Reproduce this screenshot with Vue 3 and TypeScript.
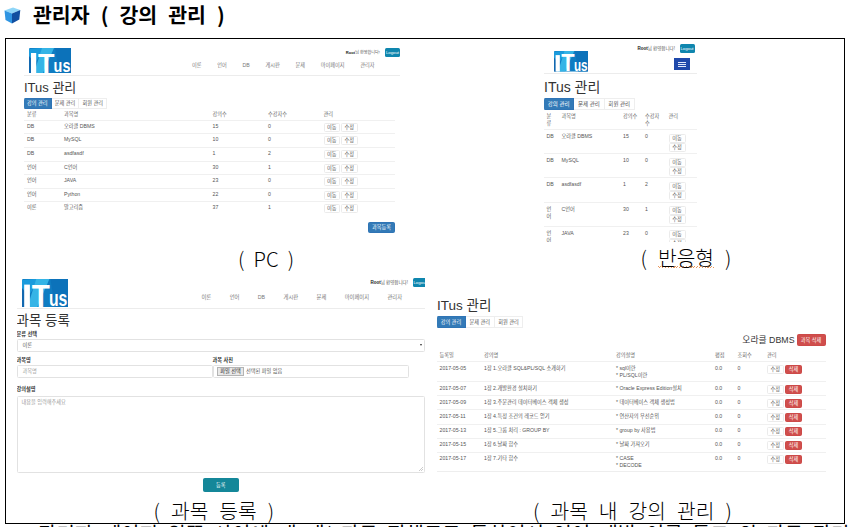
<script setup lang="ts">
import { defineComponent, h } from 'vue'

interface Course {
  kind: string
  name: string
  lectures: number
  students: number
}

interface Lecture {
  date: string
  name: string
  notes: string[]
}

const nav: string[] = ['이론', '언어', 'DB', '게시판', '문제', '마이페이지', '관리자']
const tabs: string[] = ['강의 관리', '문제 관리', '회원 관리']

const courses: Course[] = [
  { kind: 'DB', name: '오라클 DBMS', lectures: 15, students: 0 },
  { kind: 'DB', name: 'MySQL', lectures: 10, students: 0 },
  { kind: 'DB', name: 'asdfasdf', lectures: 1, students: 2 },
  { kind: '언어', name: 'C언어', lectures: 30, students: 1 },
  { kind: '언어', name: 'JAVA', lectures: 23, students: 0 },
  { kind: '언어', name: 'Python', lectures: 22, students: 0 },
  { kind: '이론', name: '알고리즘', lectures: 37, students: 1 },
]

const lectures: Lecture[] = [
  { date: '2017-05-05', name: '1장 1.오라클 SQL&PL/SQL 소개하기', notes: ['* sql이란', '* PL/SQL이란'] },
  { date: '2017-05-07', name: '1장 2.개발환경 설치하기', notes: ['* Oracle Express Edition설치'] },
  { date: '2017-05-09', name: '1장 3.주문관리 데이터베이스 객체 생성', notes: ['* 데이터베이스 객체 생성법'] },
  { date: '2017-05-11', name: '1장 4.특정 조건의 레코드 얻기', notes: ['* 연산자의 우선순위'] },
  { date: '2017-05-13', name: '1장 5.그룹 처리 : GROUP BY', notes: ['* group by 사용법'] },
  { date: '2017-05-15', name: '1장 6.날짜 함수', notes: ['* 날짜 가져오기'] },
  { date: '2017-05-17', name: '1장 7.기타 함수', notes: ['* CASE', '* DECODE'] },
]

const word = (x: number, size: number, length: number, value: string, y: number) =>
  h('text', {
    x, y, fill: '#fff', 'font-size': size, 'font-weight': 700,
    'font-family': 'Liberation Sans, sans-serif',
    textLength: length, lengthAdjust: 'spacingAndGlyphs',
  }, value)

const Logo = defineComponent({
  render: () =>
    h('svg', { viewBox: '0 0 42 25', preserveAspectRatio: 'none' }, [
      h('rect', { width: 42, height: 25, rx: 1.2, fill: '#0f7cc2' }),
      h('path', { d: 'M0 1L11 0L16 0L8 12L0 25Z', fill: '#1a9bdc' }),
      h('path', { d: 'M13 0L25 0L14 25L5 25Z', fill: '#35b4e6' }),
      h('path', { d: 'M0 8L5 14L3 25H0Z', fill: '#1268b0' }),
      h('path', { d: 'M26 0L42 0V25H30Z', fill: '#0c72ba' }),
      h('rect', { x: 2, y: 5, width: 5.2, height: 20, fill: '#fff' }),
      word(9, 28.5, 16.5, 'T', 24.8),
      word(24.6, 19, 16.8, 'us', 23.8),
    ]),
})
</script>

<template>
  <main class="page">
    <h1 class="title">
      <svg class="cube" viewBox="0 0 17 17">
        <path d="M0.5 3.5L9 0.5L16.3 3L8 6.5Z" fill="#8fd6f8" />
        <path d="M0.5 3.5L8 6.5V16.6L1.5 13Z" fill="#2f95e2" />
        <path d="M8 6.5L16.3 3L15.3 12.6L8 16.6Z" fill="#114fa0" />
      </svg>
      <span>관리자 ( 강의 관리 )</span>
    </h1>

    <section class="frame">
      <figure class="pc">
        <div class="shot">
          <header class="site">
            <Logo class="logo" />
            <div class="side">
              <div class="user"><span><b>Root</b>님 환영합니다!</span><i class="logout">Logout</i></div>
              <nav><a v-for="n in nav" :key="n">{{ n }}</a></nav>
            </div>
          </header>
          <h2>ITus 관리</h2>
          <div class="tabs"><a v-for="t in tabs" :key="t">{{ t }}</a></div>
          <div class="table">
            <div class="row head"><span>분류</span><span>과목명</span><span>강의수</span><span>수강자수</span><span>관리</span></div>
            <div v-for="c in courses" :key="c.name" class="row">
              <span>{{ c.kind }}</span><span>{{ c.name }}</span><span>{{ c.lectures }}</span><span>{{ c.students }}</span>
              <span class="acts"><i class="btn">이동</i><i class="btn">수정</i></span>
            </div>
          </div>
          <div class="submit"><i class="btn primary">과목등록</i></div>
        </div>
        <figcaption>( PC )</figcaption>
      </figure>

      <figure class="mobile">
        <div class="shot">
          <div class="user"><span><b>Root</b>님 환영합니다!</span><i class="logout">Logout</i></div>
          <header class="site">
            <Logo class="logo" />
            <span class="burger"><i></i><i></i><i></i></span>
          </header>
          <h2>ITus 관리</h2>
          <div class="tabs"><a v-for="t in tabs" :key="t">{{ t }}</a></div>
          <div class="table">
            <div class="row head"><span>분류</span><span>과목명</span><span>강의수</span><span>수강자수</span><span>관리</span></div>
            <div v-for="c in courses.slice(0, 5)" :key="c.name" class="row">
              <span>{{ c.kind }}</span><span>{{ c.name }}</span><span>{{ c.lectures }}</span><span>{{ c.students }}</span>
              <span class="acts"><i class="btn">이동</i><i class="btn">수정</i></span>
            </div>
          </div>
        </div>
        <figcaption>( <u>반응형</u> )</figcaption>
      </figure>

      <figure class="create">
        <div class="shot">
          <header class="site">
            <Logo class="logo" />
            <div class="side">
              <div class="user"><span><b>Root</b>님 환영합니다!</span><i class="logout">Logout</i></div>
              <nav><a v-for="n in nav" :key="n">{{ n }}</a></nav>
            </div>
          </header>
          <h2>과목 등록</h2>
          <label>분류 선택</label>
          <div class="field select"><span>이론</span><i class="caret"></i></div>
          <div class="pair">
            <div><label>과목명</label><div class="field hint">과목명</div></div>
            <div><label>과목 사진</label><div class="field file"><i class="pick">파일 선택</i><span>선택된 파일 없음</span></div></div>
          </div>
          <label class="desc">강의설명</label>
          <div class="field area hint">
            <span>내용을 입력해주세요</span>
            <svg class="grip" viewBox="0 0 4 4"><path d="M0 4L4 0M2 4L4 2" stroke="#aaa" stroke-width=".6" /></svg>
          </div>
          <div class="submit"><i class="btn teal">등록</i></div>
        </div>
        <figcaption>( 과목 등록 )</figcaption>
      </figure>

      <figure class="lectures">
        <div class="shot">
          <h2>ITus 관리</h2>
          <div class="tabs"><a v-for="t in tabs" :key="t">{{ t }}</a></div>
          <div class="course"><h3>오라클 DBMS</h3><i class="btn danger big">과목 삭제</i></div>
          <div class="table">
            <div class="row head"><span>등록일</span><span>강의명</span><span>강의설명</span><span>평점</span><span>조회수</span><span>관리</span></div>
            <div v-for="l in lectures" :key="l.date" class="row" :class="{ tall: l.notes.length > 1 }">
              <span>{{ l.date }}</span><span>{{ l.name }}</span>
              <span class="notes"><em v-for="n in l.notes" :key="n">{{ n }}</em></span>
              <span>0.0</span><span>0</span>
              <span class="acts"><i class="btn">수정</i><i class="btn danger">삭제</i></span>
            </div>
          </div>
        </div>
        <figcaption>( 과목 내 강의 관리 )</figcaption>
      </figure>
    </section>

    <p class="body">관리자 페이지 왼쪽 사이에 개 개( 과목 진행도로 통하여서 언어 개발 이론 통그 의 과목 관리</p>
  </main>
</template>

<style>
body {
  background: #fff;
  overflow: hidden;
}
</style>

<style scoped>
* {
  box-sizing: border-box;
}
.page {
  width: 853px;
  height: 527px;
  overflow: hidden;
  font-family: 'Liberation Sans', 'Noto Sans CJK KR', sans-serif;
  color: #000;
}
i,
em {
  font-style: normal;
}
.title {
  display: flex;
  align-items: center;
  gap: 12px;
  height: 38px;
  margin: 0;
  padding: 0 0 10px 4px;
  font: 700 20.5px/28px 'Noto Sans CJK KR', sans-serif;
  word-spacing: 6.4px;
  white-space: nowrap;
}
.cube {
  width: 17px;
  height: 17px;
  margin-top: 2px;
}
.frame {
  display: grid;
  grid-template-columns: 426px 412px;
  grid-template-rows: 234px 250px;
  width: 840px;
  height: 486px;
  margin-left: 5px;
  border: 1px solid #000;
}
.body {
  margin: 0 0 0 38px;
  font: 20px/20px 'Noto Sans CJK KR', sans-serif;
  word-spacing: 5px;
  white-space: nowrap;
}

figure {
  display: flex;
  flex-direction: column;
  margin: 0;
  min-width: 0;
  white-space: nowrap;
}
figcaption {
  font: 300 20.3px/26px 'Noto Sans CJK KR', sans-serif;
  word-spacing: 6.6px;
}
figcaption u {
  padding-bottom: 0;
  text-decoration: none;
  background: repeating-linear-gradient(135deg, #e8975c 0 0.8px, transparent 0.8px 2px) 0 calc(100% - 4px) / 100% 2px no-repeat;
}
.shot {
  flex: none;
  overflow: hidden;
  font-size: 5.2px;
  line-height: 7px;
  color: #555;
}
.site {
  display: flex;
  border-bottom: 1px solid #ececec;
}
.logo {
  display: block;
  flex: none;
}
.user {
  display: flex;
  justify-content: flex-end;
  align-items: center;
  font-size: 4.5px;
  color: #555;
}
.user b {
  color: #222;
}
.logout {
  flex: none;
  width: 15px;
  border-radius: 1.5px;
  background: #0f86ae;
  color: #fff;
  font-size: 4.3px;
  line-height: 9px;
  text-align: center;
}
nav {
  display: flex;
  color: #777;
}
h2 {
  margin: 0;
  font-weight: 400;
  font-size: 13px;
  line-height: 18px;
  color: #333;
}
.tabs {
  display: flex;
}
.tabs a {
  border: 1px solid #eee;
  border-left-width: 0;
  text-align: center;
}
.tabs a:first-child {
  border-color: #2f74b5;
  border-radius: 1.5px 0 0 1.5px;
  background: #337ab7;
  color: #fff;
}
.row {
  display: grid;
  border-top: 1px solid #f0f0f0;
}
.row.head {
  border-top: 0;
  color: #666;
}
.acts {
  display: flex;
}
.btn {
  flex: none;
  border: 1px solid #ebebeb;
  border-radius: 1.5px;
  text-align: center;
}
.btn.primary {
  border-color: #2f74b5;
  background: #337ab7;
  color: #fff;
}
.btn.danger {
  border-color: #cc4a48;
  background: #d04e4c;
  color: #fff;
}
.btn.teal {
  border-color: #148799;
  background: #148799;
  color: #fff;
}
.submit {
  display: flex;
}

/* desktop list */
.pc {
  padding: 8px 0 0 18px;
}
.pc .shot {
  width: 376px;
  height: 198px;
}
.pc .site {
  height: 29px;
  padding-left: 5px;
}
.pc .logo {
  width: 42px;
  height: 25px;
  margin-top: 1px;
}
.pc .side {
  flex: 1;
}
.pc .user {
  height: 10px;
  gap: 5px;
  font-size: 4.1px;
}
.pc nav {
  gap: 15.7px;
  padding: 5px 0 0 121px;
}
.pc h2 {
  margin-top: 3px;
}
.pc .tabs a {
  width: 27.7px;
  height: 11px;
  line-height: 9px;
}
.pc .tabs {
  margin-top: 0.5px;
}
.pc .table {
  width: 371px;
}
.pc .row {
  grid-template-columns: 37px 148.5px 55.5px 55.5px 1fr;
  height: 13.55px;
  padding: 2px 0 0 3px;
}
.pc .head {
  height: 11.4px;
  padding-top: 2.5px;
}
.pc .acts {
  gap: 1px;
}
.pc .acts .btn {
  width: 16.5px;
  height: 9px;
}
.pc .submit {
  justify-content: flex-end;
  width: 371px;
  margin-top: 7.5px;
}
.pc .primary {
  width: 27px;
  height: 11px;
  line-height: 9px;
}
.pc figcaption {
  padding-left: 214px;
  word-spacing: 4.6px;
}

/* narrow list */
.mobile {
  padding: 4px 0 0 112px;
}
.mobile .shot {
  width: 153px;
  height: 199px;
}
.mobile .user {
  height: 10px;
  gap: 4.5px;
  padding-right: 2.5px;
}
.mobile .site {
  justify-content: space-between;
  height: 21px;
  padding: 0 7px 0 10px;
}
.mobile .logo {
  width: 34px;
  height: 20.5px;
  margin-top: -2px;
}
.burger {
  display: flex;
  flex-direction: column;
  align-items: center;
  justify-content: center;
  gap: 1px;
  width: 16px;
  height: 12px;
  margin-top: 5px;
  background: #1f49ab;
}
.burger i {
  width: 8px;
  height: 1px;
  background: #dfe8fb;
}
.mobile h2 {
  margin-top: 4px;
  font-size: 14px;
}
.mobile .tabs {
  margin-top: 1.5px;
}
.mobile .tabs a {
  width: 30.3px;
  height: 12px;
  font-size: 5.5px;
  line-height: 10px;
}
.mobile .row {
  grid-template-columns: 15px 61.5px 22px 23.5px 1fr;
  height: 24.2px;
  padding: 3px 0 0 2.5px;
}
.mobile .row span:nth-child(1),
.mobile .row span:nth-child(4) {
  white-space: normal;
  word-break: break-all;
  padding-right: 7.5px;
}
.mobile .row span:nth-child(1) {
  padding-right: 6.5px;
}
.mobile .head {
  height: 19.5px;
  padding-top: 3.5px;
}
.mobile .acts {
  flex-direction: column;
  padding-top: 0.5px;
}
.mobile .acts .btn {
  width: 17px;
  height: 9px;
}
.mobile figcaption {
  padding: 2px 0 0 96.5px;
}

/* course form */
.create {
  padding: 4px 0 0 10.5px;
}
.create .shot {
  width: 408.5px;
  height: 220px;
}
.create .site {
  height: 32px;
  padding-left: 5.5px;
}
.create .logo {
  width: 46px;
  height: 28px;
  margin-top: 1.5px;
}
.create .side {
  flex: 1;
}
.create .user {
  height: 10px;
  gap: 4.5px;
  margin-right: -2.5px;
  font-size: 4.5px;
}
.create nav {
  gap: 18.4px;
  padding: 7px 0 0 133.5px;
  font-size: 5.3px;
}
.create h2 {
  margin-top: 3px;
  font-size: 13.5px;
  line-height: 17px;
}
label {
  display: block;
  height: 10px;
  padding-top: 1.5px;
  font-weight: 700;
  line-height: 7px;
  color: #333;
}
.field {
  display: flex;
  align-items: center;
  height: 12.5px;
  padding: 0 5px;
  border: 1px solid #e2e2e2;
  border-radius: 1.5px;
  line-height: 8px;
}
.hint {
  color: #999;
}
.select {
  justify-content: space-between;
  padding-right: 2px;
}
.caret {
  border: 1.3px solid transparent;
  border-top: 2px solid #333;
  border-bottom: 0;
}
.pair {
  display: grid;
  grid-template-columns: 196px 196px;
  margin-top: 3.5px;
}
.file {
  gap: 2px;
  padding-left: 3.5px;
}
.pick {
  width: 27px;
  height: 9px;
  border: 1px solid #b4b4b4;
  background: #e8e8e8;
  line-height: 7px;
  text-align: center;
  color: #222;
}
.desc {
  margin-top: 7px;
  height: 11px;
}
.area {
  align-items: flex-start;
  justify-content: space-between;
  height: 77px;
  padding: 1px 1px 1px 4px;
}
.grip {
  align-self: flex-end;
  width: 4px;
  height: 4px;
}
.create .submit {
  justify-content: center;
  margin-top: 5px;
}
.teal {
  width: 36px;
  height: 14px;
  line-height: 12px;
}
.create figcaption {
  padding-left: 137px;
}

/* lecture list */
.lectures {
  padding: 23px 0 0 5px;
}
.lectures .shot {
  width: 388.5px;
  height: 201px;
}
.lectures h2 {
  font-size: 13.5px;
  line-height: 20px;
}
.lectures .tabs a {
  width: 28.8px;
  height: 12px;
  line-height: 10px;
}
.course {
  display: flex;
  justify-content: flex-end;
  align-items: center;
  gap: 2px;
  height: 12px;
  margin-top: 6px;
}
h3 {
  margin: 0;
  font-weight: 400;
  font-size: 8.8px;
  line-height: 12px;
  color: #333;
}
.big {
  width: 29px;
  height: 12px;
  line-height: 10px;
}
.lectures .row {
  grid-template-columns: 44.5px 132px 99px 22.5px 29.5px 1fr;
  height: 14.2px;
  padding: 2.5px 0 0 2.5px;
}
.lectures .head {
  height: 15px;
  padding-top: 5.5px;
}
.lectures .tall {
  height: 20px;
}
.lectures .tall:last-child {
  border-bottom: 1px solid #eee;
}
.notes {
  display: flex;
  flex-direction: column;
}
.lectures .acts {
  gap: 1.5px;
}
.lectures .acts .btn {
  width: 16.7px;
  height: 9px;
}
.lectures figcaption {
  padding-left: 96px;
}
</style>
